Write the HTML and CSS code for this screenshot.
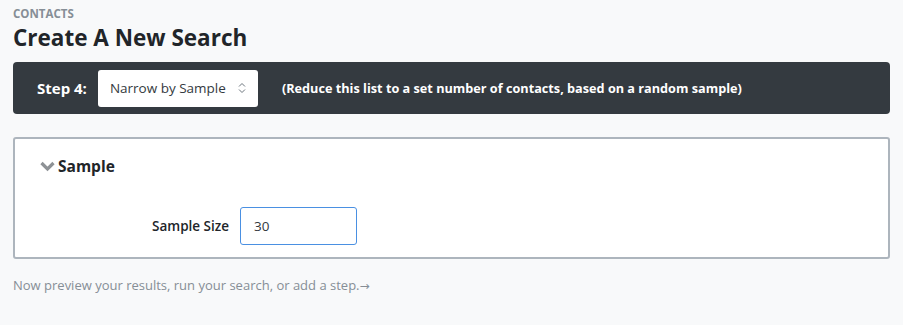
FILE: index.html
```html
<!DOCTYPE html>
<html lang="en">
<head>
    <meta charset="UTF-8">
    <meta name="viewport" content="width=device-width, initial-scale=1.0">
    <title>Create A New Search</title>
    <link rel="stylesheet" href="styles.css">
</head>
<body>
    <div class="page">
        <div class="crumb">CONTACTS</div>
        <h1 class="title">Create A New Search</h1>

        <div class="step-bar">
            <label class="step-label" for="stepType">Step 4:</label>
            <div class="select-wrap">
                <select id="stepType" class="step-select">
                    <option>Narrow by Sample</option>
                </select>
                <svg class="select-arrows" width="8" height="12" viewBox="0 0 8 12">
                    <path d="M1 4.5 L4 1.5 L7 4.5 M1 7.5 L4 10.5 L7 7.5" fill="none" stroke="#6c757d" stroke-width="1"/>
                </svg>
            </div>
            <span class="step-note">(Reduce this list to a set number of contacts, based on a random sample)</span>
        </div>

        <div class="card">
            <div class="card-head">
                <svg class="chevron" width="15" height="11" viewBox="0 0 15 11">
                    <path d="M1.5 2 L7.5 8 L13.5 2" fill="none" stroke="#8e9296" stroke-width="3.2"/>
                </svg>
                <span>Sample</span>
            </div>
            <div class="form-row">
                <label for="sampleSize">Sample Size</label>
                <input type="text" id="sampleSize" value="30">
            </div>
        </div>

        <p class="hint">Now preview your results, run your search, or add a step.<span class="arrow">&rarr;</span></p>
    </div>
</body>
</html>
```

FILE: styles.css
```css
body {
    margin: 0;
    background-color: #f8f9fa;
    font-family: "Open Sans", "Noto Sans", sans-serif;
    color: #212529;
}

.page {
    padding: 6px 13px 0 13px;
}

.crumb {
    font-size: 11.5px;
    font-weight: 700;
    color: #868e96;
    line-height: 16px;
}

.title {
    margin: 2px 0 10px 0;
    font-size: 22.5px;
    font-weight: 700;
    line-height: 28px;
    color: #212529;
}

.step-bar {
    display: flex;
    align-items: center;
    background-color: #343a40;
    border-radius: 4px;
    height: 52px;
    padding: 0 24px;
    color: #fff;
}

.step-label {
    font-size: 15px;
    font-weight: 700;
    margin-right: 11px;
}

.select-wrap {
    position: relative;
    width: 160px;
    height: 37px;
}

.step-select {
    appearance: none;
    width: 100%;
    height: 100%;
    border: none;
    border-radius: 3px;
    background-color: #fff;
    padding: 0 12px;
    font-family: inherit;
    font-size: 13.5px;
    color: #343a40;
}

.select-arrows {
    position: absolute;
    right: 12px;
    top: 12px;
    pointer-events: none;
}

.step-note {
    margin-left: 24px;
    font-size: 12.7px;
    font-weight: 700;
}

.card {
    margin-top: 23px;
    background-color: #fff;
    border: 2px solid #adb5bd;
    border-radius: 3px;
    height: 122px;
    box-sizing: border-box;
}

.card-head {
    display: flex;
    align-items: center;
    padding: 16px 0 0 25px;
    font-size: 15.5px;
    font-weight: 700;
    color: #212529;
}

.chevron {
    margin-right: 3px;
}

.form-row {
    display: flex;
    align-items: center;
    margin-top: 30px;
    padding-left: 137px;
}

.form-row label {
    font-size: 13.5px;
    font-weight: 600;
    color: #212529;
    margin-right: 11px;
}

.form-row input {
    width: 117px;
    height: 38px;
    box-sizing: border-box;
    border: 1px solid #4a90e2;
    border-radius: 3px;
    padding: 0 13px;
    font-family: inherit;
    font-size: 13.5px;
    color: #343a40;
    outline: none;
}

.hint {
    margin: 17px 0 0 0;
    font-size: 13px;
    color: #868e96;
}

.hint .arrow {
    font-family: "DejaVu Sans", sans-serif;
    font-size: 12px;
}
```
